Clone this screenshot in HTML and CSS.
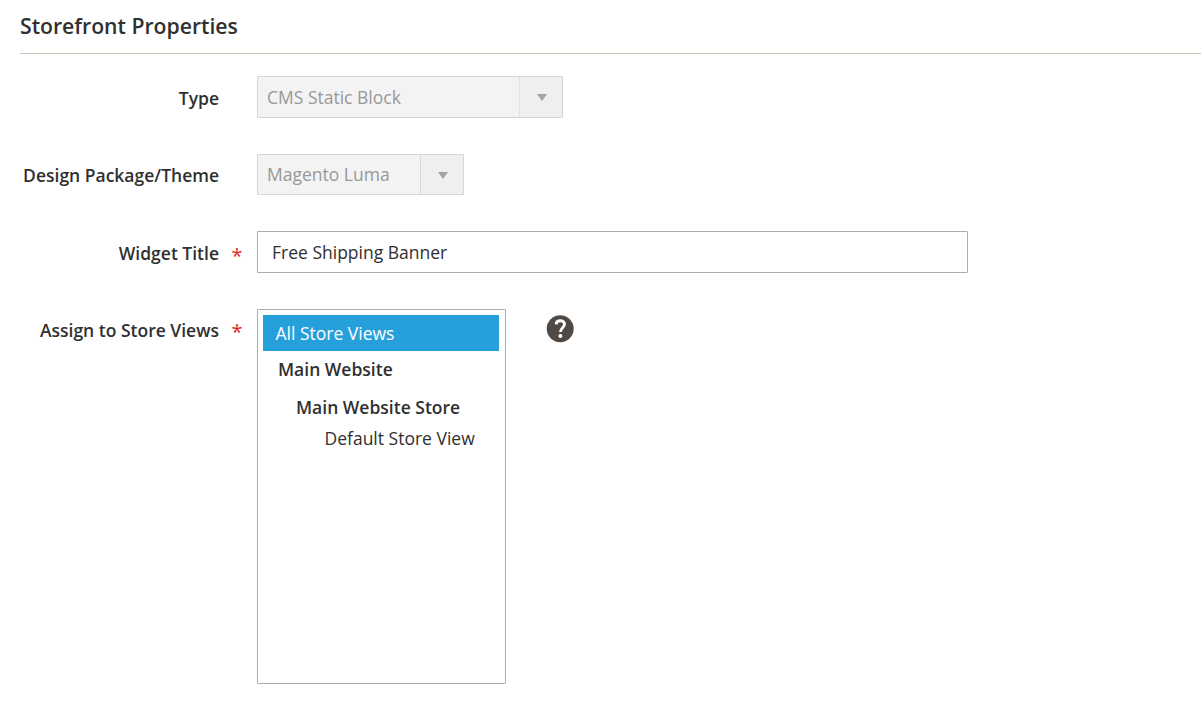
FILE: index.html
```html
<!DOCTYPE html>
<html lang="en">
<head>
<meta charset="utf-8">
<title>Storefront Properties</title>
<link rel="stylesheet" href="styles.css">
</head>
<body>
<main class="fieldset">
  <h1 class="legend">Storefront Properties</h1>
  <div class="field field-type">
    <div class="label"><span>Type</span></div>
    <div class="select select-type">
      <div class="value"><span>CMS Static Block</span></div>
      <div class="toggle"><svg width="10" height="7" viewBox="0 0 10 7"><path d="M0 0h10L5 7z" fill="#a8a39f"/></svg></div>
    </div>
  </div>
  <div class="field field-theme">
    <div class="label"><span>Design Package/Theme</span></div>
    <div class="select select-theme">
      <div class="value"><span>Magento Luma</span></div>
      <div class="toggle"><svg width="10" height="7" viewBox="0 0 10 7"><path d="M0 0h10L5 7z" fill="#a8a39f"/></svg></div>
    </div>
  </div>
  <div class="field field-title">
    <div class="label required"><span>Widget Title</span><span class="star">*</span></div>
    <div class="input"><span>Free Shipping Banner</span></div>
  </div>
  <div class="field field-stores">
    <div class="label required"><span>Assign to Store Views</span><span class="star">*</span></div>
    <div class="listbox">
      <div class="option selected"><span>All Store Views</span></div>
      <div class="option website"><span>Main Website</span></div>
      <div class="option store"><span>Main Website Store</span></div>
      <div class="option view"><span>Default Store View</span></div>
    </div>
    <svg class="help" width="28" height="28" viewBox="0 0 28 28">
      <circle cx="14.2" cy="13.8" r="13.5" fill="#514943"/>
      <path d="M10.1 9.4C10.3 6.9 11.9 5.7 14.2 5.7c2.5 0 4.3 1.5 4.3 3.6 0 3.4-4 3.6-4 7.6" fill="none" stroke="#fff" stroke-width="2.9"/>
      <circle cx="14.4" cy="21" r="2" fill="#fff"/>
    </svg>
  </div>
</main>
</body>
</html>
```
FILE: styles.css
```css
* { box-sizing: border-box; }
body {
  margin: 0;
  background: #fff;
  color: #303030;
  font: 17.5px/24px "Open Sans", "Noto Sans", sans-serif;
  overflow: hidden;
}
span { white-space: nowrap; }
.fieldset { padding-left: 20px; }
.legend {
  margin: 0 0 23px;
  height: 54px;
  padding-top: 11px;
  border-bottom: 1px solid #cac3b4;
  font-size: 21.2px;
  line-height: 30px;
  font-weight: 600;
}
.field { display: flex; align-items: flex-start; }
.field-type { height: 77px; }
.field-theme { height: 77px; }
.field-title { height: 78px; }
.label {
  display: flex;
  justify-content: flex-end;
  width: 237px;
  padding: 9px 38px 0 0;
  font-weight: 600;
}
.label.required { padding-right: 0; }
.field-title .label { padding-top: 10px; }
.star {
  width: 38px;
  padding: 3px 0 0 12.5px;
  color: #e22626;
  font-size: 20px;
  font-weight: 400;
}
.field-stores .star { padding-top: 2px; }
.select {
  display: flex;
  height: 42px;
  border: 1px solid #d6d6d6;
  border-radius: 1px;
  background: #f3f3f3;
  color: #989898;
}
.select-type { width: 306px; margin-top: -1px; }
.select-theme { width: 207px; height: 41px; }
.value { flex: 1; padding: 8px 0 0 9px; }
.select-theme .value { padding-top: 7px; }
.toggle {
  display: flex;
  align-items: center;
  justify-content: center;
  width: 43px;
  padding: 1px 0 0 1px;
  border-left: 1px solid #d9d9d9;
  background: #efefef;
}
.select-type .toggle { border-left-color: #e0e0e0; }
.input {
  width: 711px;
  height: 42px;
  padding: 8px 14px;
  border: 1px solid #adadad;
  border-radius: 1px;
}
.listbox {
  width: 249px;
  height: 375px;
  padding: 5px 6px 5px 5px;
  border: 1px solid #adadad;
  border-radius: 1px;
}
.option { height: 36px; padding: 6px 0 0 12.5px; }
.selected { background: #26a0da; color: #fff; }
.website { height: 38px; padding-left: 15px; font-weight: 600; }
.store { height: 31px; padding-left: 33px; font-weight: 600; }
.view { padding-left: 61.5px; }
.help { margin: 6px 0 0 40px; }
```
